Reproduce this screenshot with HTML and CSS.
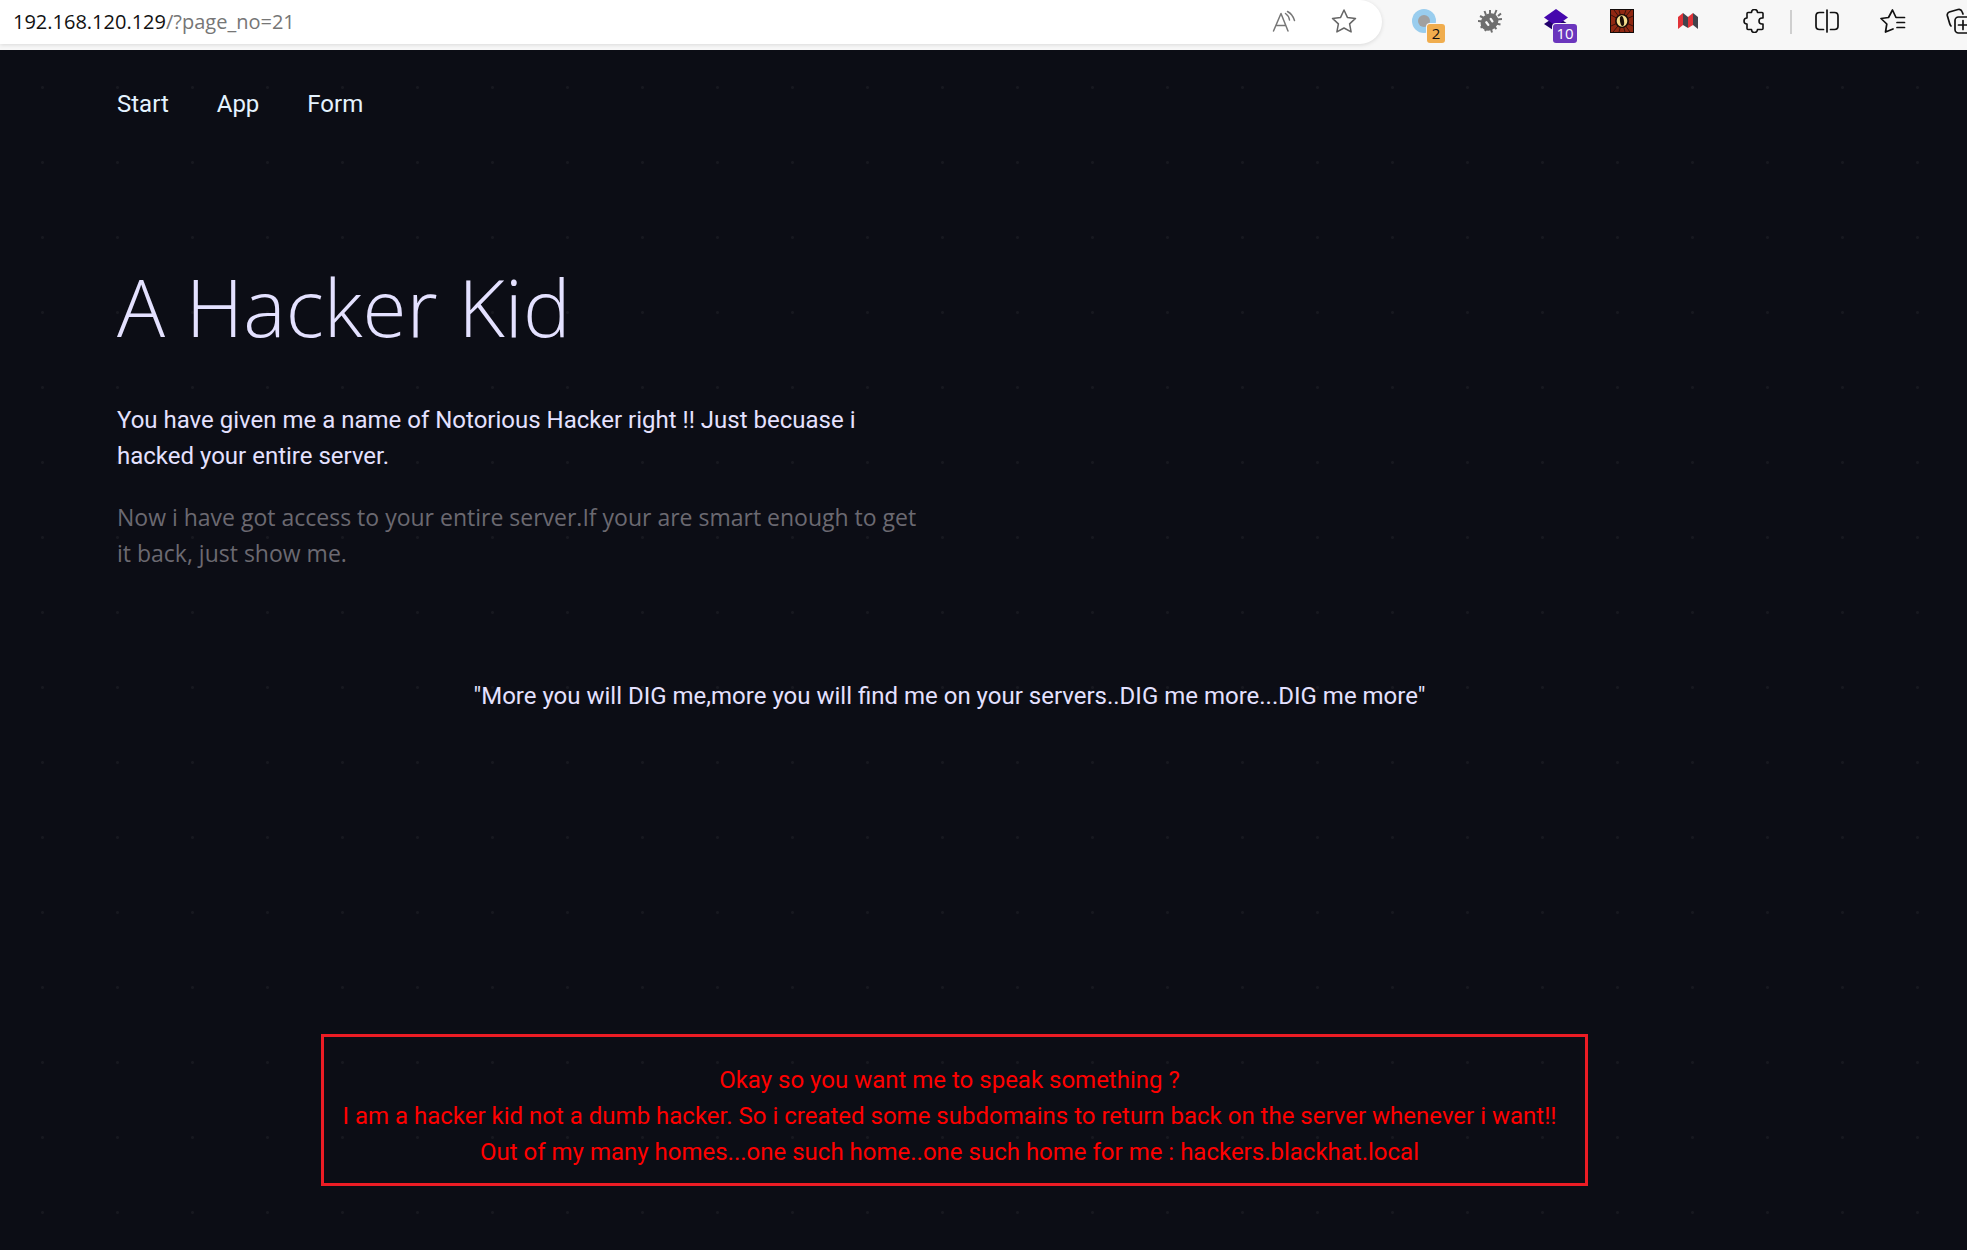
FILE: index.html
```html
<!DOCTYPE html>
<html lang="en">
<head>
<meta charset="utf-8">
<meta name="viewport" content="width=device-width, initial-scale=1">
<title>A Hacker Kid</title>
<link rel="stylesheet" href="styles.css">
</head>
<body>
<div class="toolbar">
  <div class="address">
    <div class="url" role="textbox" contenteditable="true" spellcheck="false" aria-label="Address">192.168.120.129<span class="url-path">/?page_no=21</span></div>
    <button class="address-button" type="button" aria-label="Read aloud">
      <svg width="24" height="24" viewBox="0 0 24 24" fill="none" stroke="#777" stroke-width="1.5" stroke-linecap="round" stroke-linejoin="round"><path d="M1.5 22 9 4.500 16 22M4 16.500H13.500M13.500 4.500Q17 7 17.500 11M15.500 2.500Q20.500 5 22.500 11.500"/></svg>
    </button>
    <button class="address-button" type="button" aria-label="Add to favorites">
      <svg width="26" height="26" viewBox="0 0 26 26" fill="none" stroke="#666" stroke-width="1.500" stroke-linejoin="round"><path d="m13 2 3.400 7.400 8.100 1-5.900 5.500 1.500 8-7.100-3.900-7.100 3.900 1.500-8-5.900-5.500 8.100-1Z"/></svg>
    </button>
  </div>
  <div class="extensions">
    <button class="tool" type="button" aria-label="Proxy">
      <svg width="24" height="24" viewBox="0 0 24 24"><circle cx="12" cy="12" r="12" fill="#99cdee"/><circle cx="12" cy="12" r="6" fill="#a0a0a0"/></svg>
      <span class="badge badge-orange">2</span>
    </button>
    <button class="tool" type="button" aria-label="Bug finder">
      <svg width="24" height="24" viewBox="0 0 24 24"><ellipse cx="11.500" cy="13" rx="9.500" ry="8" fill="#6e6e6e" transform="rotate(-42 11.500 13)"/><path d="m6.500 2 1.500 4M12 1v4M18.500 1l-2 5M20 7l3-2.500M24 10l-5 .5M22.500 15.500l-5-1M18.500 20l-3-3M14 23.500l-1.500-5M7 22l2-3M2.500 18.500 6 17M0 12l5 .5M2 7l4 2" stroke="#6e6e6e" stroke-width="2"/><path d="m8.300 13.300 2 2.600M12.700 9.900l1.700 2.500" stroke="#f7f7f7" stroke-width="2.300" stroke-linecap="round"/></svg>
    </button>
    <button class="tool" type="button" aria-label="Technology profiler">
      <svg width="24" height="24" viewBox="0 0 24 24"><path d="m0 15 12-8 12 8-12 8Z" fill="#21006b"/><path d="M0 8.500 12 0l12 8.500L12 17Z" fill="#4608ad"/></svg>
      <span class="badge badge-purple">10</span>
    </button>
    <button class="tool" type="button" aria-label="Eye">
      <svg width="24" height="24" viewBox="0 0 24 24"><path fill="#120b09" d="M0 0h24v24H0z"/><path fill="#902812" d="M1 1h22v22H1z"/><path d="m12 12-8-11M12 12 9 1M12 12l4-11M12 12l9-11M12 12 23 7M12 12l11 5M12 12l8 11M12 12l3 11M12 12 9 23M12 12 3 23M12 12 1 17M12 12 1 6" stroke="#3b120b" stroke-width="1"/><circle cx="12" cy="12" r="7" fill="#190b08"/><ellipse cx="12" cy="12" rx="5.300" ry="5.800" fill="#f4dc8d"/><ellipse cx="12" cy="12" rx="2" ry="5" fill="#1d1009" transform="rotate(-8 12 12)"/></svg>
    </button>
    <button class="tool" type="button" aria-label="Site report">
      <svg width="20" height="18" viewBox="0 0 20 18"><path fill="#e13339" d="m0 5 5-4v12l-5 4Z"/><path fill="#42434c" d="m5 1 5 4v11l-5-3Z"/><path fill="#e13339" d="m10 5 5-4v12l-5 3Z"/><path fill="#42434c" d="m15 1 5 4v12l-5-4Z"/></svg>
    </button>
    <button class="tool" type="button" aria-label="Extensions">
      <svg width="24" height="24" viewBox="0 0 24 24" fill="none" stroke="#111" stroke-width="1.600" stroke-linejoin="round"><path d="M6 3.500h3.500a3 3 0 0 1 6 0H20q1 0 1 1V9h-1a3 3 0 0 0 0 6h1v4.500q0 1-1 1h-4.500a3 3 0 0 1-6 0H6q-1 0-1-1V15a3 3 0 0 1 0-6V4.500q0-1 1-1Z"/></svg>
    </button>
  </div>
  <div class="browser-tools">
    <button class="tool" type="button" aria-label="Split screen">
      <svg width="24" height="24" viewBox="0 0 24 24" fill="none" stroke="#111" stroke-width="1.700" stroke-linecap="round"><path d="M8.500 3.500h-4Q1 3.500 1 7v10q0 3.500 3.500 3.500h4M15.500 3.500h4Q23 3.500 23 7v10q0 3.500-3.500 3.500h-4M12 1v22"/></svg>
    </button>
    <button class="tool" type="button" aria-label="Favorites">
      <svg width="26" height="24" viewBox="0 0 26 24" fill="none" stroke="#111" stroke-width="1.700" stroke-linecap="round" stroke-linejoin="round"><path d="m13 20-7.500 3 1.300-8L1 9.500l7.500-1L12.500 1 16 8.500h8.500M17 13.500h7.500M17 18.500h7.500"/></svg>
    </button>
    <button class="tool" type="button" aria-label="Collections">
      <svg width="26" height="26" viewBox="0 0 26 26" fill="none" stroke="#111" stroke-width="1.700" stroke-linecap="round"><path d="M5 18Q4 17 3.500 15L1.300 7.500Q.8 5 3.300 4L12 1.500q3-.7 4 2L17 6"/><rect x="9" y="9" width="16" height="16" rx="3.500"/><path d="M17 12.500v9M12.500 17h9"/></svg>
    </button>
  </div>
</div>
<div class="page">
  <nav class="nav" aria-label="Main">
    <a href="#start">Start</a>
    <a href="#app">App</a>
    <a href="#form">Form</a>
  </nav>
  <main>
    <section class="intro">
      <h1>A Hacker Kid</h1>
      <p class="lead">You have given me a name of Notorious Hacker right !! Just becuase i hacked your entire server.</p>
      <p class="muted">Now i have got access to your entire server.If your are smart enough to get it back, just show me.</p>
    </section>
    <p class="quote">"More you will DIG me,more you will find me on your servers..DIG me more...DIG me more"</p>
    <p class="message">Okay so you want me to speak something ?<br>I am a hacker kid not a dumb hacker. So i created some subdomains to return back on the server whenever i want!!<br>Out of my many homes...one such home..one such home for me : hackers.blackhat.local</p>
  </main>
</div>
</body>
</html>
```
FILE: styles.css
```css
* {
  box-sizing: border-box;
}

body {
  display: flex;
  flex-direction: column;
  min-height: 100vh;
  margin: 0;
  overflow-x: hidden;
  background: #0c0d15;
  color: #e4e1ff;
  font: 24px/36px Roboto, sans-serif;
}

h1,
p {
  margin: 0;
}

button {
  padding: 0;
  border: 0;
  background: none;
}

.toolbar {
  display: flex;
  height: 50px;
  margin-right: -25px;
  background: #f7f7f7;
}

.address {
  display: flex;
  flex: 1;
  height: 44px;
  padding: 0 8px 0 13px;
  border-radius: 0 22px 22px 0;
  background: #fff;
  box-shadow: 0 1px 4px #0000001f;
}

.url {
  flex: 1;
  color: #111;
  font: 20px/44px "Open Sans", sans-serif;
  white-space: nowrap;
}

.url-path {
  color: #767676;
}

.address-button,
.tool {
  display: flex;
  flex: none;
  align-items: center;
  justify-content: center;
  height: 42px;
}

.address-button {
  width: 60px;
}

.tool {
  position: relative;
  width: 66px;
}

.extensions,
.browser-tools {
  display: flex;
}

.extensions {
  margin-left: 9px;
}

.browser-tools::before {
  width: 2px;
  height: 24px;
  margin: 10px 2px 0 3px;
  background: #cfcfcf;
  content: "";
}

.badge {
  position: absolute;
  top: 24px;
  left: 36px;
  min-width: 18px;
  padding: 0 4px;
  border-radius: 3px;
  box-shadow: 0 0 0 1px #f7f7f7;
  font: 15px/19px "Open Sans", sans-serif;
}

.badge-orange {
  background: #f0ad4e;
  color: #111;
}

.badge-purple {
  left: 30px;
  min-width: 24px;
  padding: 0 3px;
  background: #6b36bd;
  color: #fff;
}

.page {
  flex: 1;
  padding: 36px 185px 62px 117px;
  background: radial-gradient(circle, #17181f 1px, transparent 2px) 5px 0 / 75px 75px;
}

.nav {
  display: flex;
  gap: 48px;
}

.nav a {
  color: #e4f3ff;
  text-decoration: none;
}

.intro {
  max-width: 810px;
  margin-top: 134px;
}

h1 {
  font: 300 80px/100px "Open Sans", sans-serif;
}

.lead {
  margin-top: 46px;
}

.muted {
  margin-top: 25px;
  color: #6b6971;
  font-family: "Open Sans", sans-serif;
  font-size: 23px;
}

.quote {
  margin-top: 107px;
  text-align: center;
}

.message {
  margin: 320px 194px 0 204px;
  padding: 25px 10px 13px 0;
  border: 3px solid #ed1c24;
  color: #f00;
  text-align: center;
}
```
